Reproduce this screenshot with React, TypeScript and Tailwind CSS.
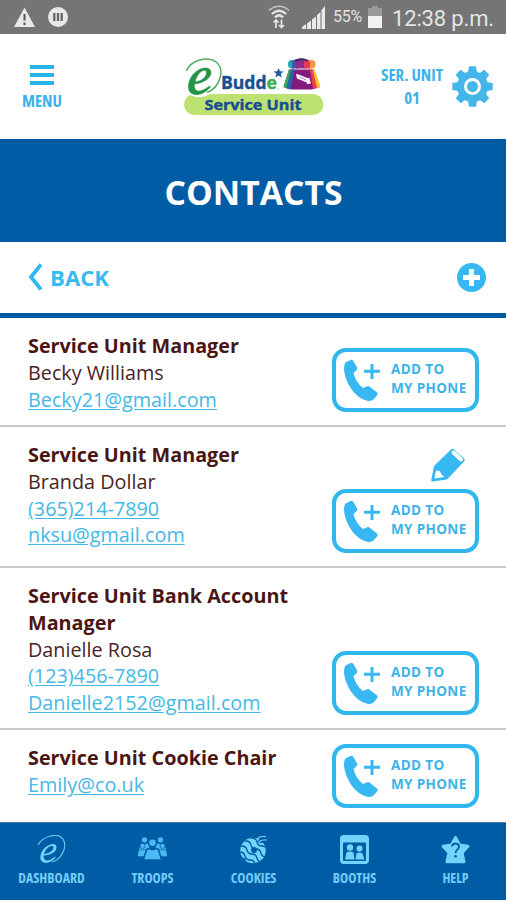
import type { ReactNode } from "react";

type Contact = {
  id: number;
  role: string;
  name?: string;
  phone?: string;
  email: string;
  height: string;
  editable?: boolean;
};

const contacts: Contact[] = [
  {
    id: 1,
    role: "Service Unit Manager",
    name: "Becky Williams",
    email: "Becky21@gmail.com",
    height: "h-[109px]",
  },
  {
    id: 2,
    role: "Service Unit Manager",
    name: "Branda Dollar",
    phone: "(365)214-7890",
    email: "nksu@gmail.com",
    height: "h-[141px]",
    editable: true,
  },
  {
    id: 3,
    role: "Service Unit Bank Account Manager",
    name: "Danielle Rosa",
    phone: "(123)456-7890",
    email: "Danielle2152@gmail.com",
    height: "h-[162px]",
  },
  {
    id: 4,
    role: "Service Unit Cookie Chair",
    email: "Emily@co.uk",
    height: "h-[92px]",
  },
];

const teeth = [0, 45, 90, 135, 180, 225, 270, 315];

function StatusBar() {
  return (
    <div className="flex h-[34px] items-center bg-[#757575] pl-[14px] pr-3 font-['Roboto',sans-serif] text-[#e4e4e4]">
      <svg className="h-5 w-[21px]" viewBox="0 0 21 20">
        <path d="M10.5 0.5 21 20H0Z" fill="#e8e8e8" />
        <path d="M10.5 7v6.5M10.5 15.5v2.5" stroke="#555" strokeWidth="2" />
      </svg>
      <svg className="ml-[13px] h-5 w-5" viewBox="0 0 20 20">
        <circle cx="10" cy="10" r="10" fill="#e8e8e8" />
        <path d="M6.3 6v8M10 6v8M13.7 6v8" stroke="#666" strokeWidth="2.3" />
      </svg>
      <svg className="ml-auto h-6 w-[22px]" viewBox="0 0 22 24" fill="none" stroke="#e4e4e4">
        <path d="M0.8 5.5Q11 -3 21.2 5.5" strokeWidth="1.6" opacity=".7" />
        <path d="M3.8 9Q11 2.5 18.2 9" strokeWidth="2.2" />
        <path d="M7 12.3Q11 8.5 15 12.3" strokeWidth="2.5" />
        <path d="M8 23v-8M5.5 17.5 8 15l2.5 2.5M13.5 14.5v8M11 20l2.5 2.5L16 20" strokeWidth="1.7" />
      </svg>
      <svg className="ml-[12px] h-[23px] w-[23px]" viewBox="0 0 23 23" fill="#e8e8e8">
        <path d="M0 23v-2l4-3v5zM5 23v-5.5l4-3V23zM10 23v-9.5l4-3V23zM15 23V9l3.5-3v17zM19.5 23V4L23 0v23z" />
      </svg>
      <span className="ml-[8px] w-[31px] whitespace-nowrap text-[16px] tracking-[-0.3px]">55%</span>
      <svg className="ml-[4px] h-[22px] w-[14px]" viewBox="0 0 14 22">
        <path d="M4 0h6v2h4v20H0V2h4z" fill="#999" />
        <path d="M0 10h14v12H0z" fill="#f2f2f2" />
      </svg>
      <span className="ml-[10px] w-[102px] whitespace-nowrap pt-[3px] text-[22px] leading-none tracking-[-0.15px]">
        12:38 p.m.
      </span>
    </div>
  );
}

function Logo() {
  return (
    <svg className="h-[60px] w-[142px]" viewBox="0 0 142 60">
      <rect x="2" y="37" width="139.5" height="21" rx="10.5" fill="#bde271" />
      <path d="M4 30 6 35.5Q10 41 19 40q8-1 14-7Z" fill="#fff" />
      <path
        d="M4.500 14C9 3 25-1 33.500 4.500c10 7 5 26-8.500 31"
        fill="none"
        stroke="#52ad62"
        strokeWidth="1.5"
      />
      <path
        fillRule="evenodd"
        d="M29 15.5C29 21 22 26 12.500 27c-1 8 5 10 15 2l1 1C18 42 5 39 6.500 28 8 17 17 11 23.500 11c3.500 0 5.500 2 5.500 4.500ZM13 25c7-1 11.500-5 11.500-9.500C24.500 11 16 13 13 25Z"
        fill="#259447"
        stroke="#259447"
        strokeWidth=".6"
      />
      <text
        x="39"
        y="32"
        className="font-['Open_Sans',sans-serif] text-[17.5px] font-bold"
        fill="#194f94"
        stroke="#194f94"
        strokeWidth=".4"
        textLength="56"
        lengthAdjust="spacingAndGlyphs"
      >
        Budd<tspan fill="#42ac55" stroke="#42ac55">e</tspan>
      </text>
      <path d="m96.500 11 1.500 3.300 3.700.2-2.900 2.300 1 3.700-3.300-2-3.100 2 1-3.700-2.900-2.300 3.700-.2z" fill="#225aa5" />
      <circle cx="96.5" cy="32" r=".6" fill="#6ab771" />
      <rect x="106" y="3" width="9" height="8.5" rx="4" fill="#27a5b8" />
      <rect x="124" y="3" width="9.5" height="8.5" rx="4" fill="#f59a3c" />
      <path d="M110 4q4-2 6-2v9.500h-6z" fill="#3f57a8" />
      <path d="M114 2.500q5-2 10 0v9h-10z" fill="#8c2b8c" />
      <path d="M122 2q5 .5 6 3v6.500h-6z" fill="#e23c5c" />
      <path d="M113 4q7-3.500 13 0" fill="none" stroke="#4b2670" strokeWidth="2" />
      <path d="M107 12.500h25l6 17.500-8 2.500h-20l-8.500-2.500z" fill="#84197f" />
      <path d="m107 12.500-5.500 17.500 3 1.500 5-19z" fill="#37a854" />
      <path d="m109 12.500-4.500 19 4 1 4-20z" fill="#2865ad" />
      <path d="m128 12.500 3 19.500 4-1-4.500-18.500z" fill="#ee3f48" />
      <path d="m130.500 12.500 4.500 18.500 3.500-1.500-6-17z" fill="#ffc42f" />
      <path d="m114 17 2.500.5 10 4 .5-1.500 2 6.500-4.500.5.500-1.500-10-4z" fill="#fff" />
      <path d="m117.500 20 7 3.200" stroke="#b476b5" strokeWidth="1" />
      <text
        x="22.5"
        y="52.5"
        className="font-['Open_Sans',sans-serif] text-[14.5px] font-bold"
        fill="#174c91"
        stroke="#174c91"
        strokeWidth=".4"
        textLength="97"
        lengthAdjust="spacingAndGlyphs"
      >
        Service Unit
      </text>
    </svg>
  );
}

function Header() {
  return (
    <header className="flex h-[105px] items-start justify-between bg-white font-['Open_Sans',sans-serif] font-bold text-[#3bb3e8]">
      <div className="flex w-[84px] flex-col items-center pt-[31px]">
        <div className="flex w-6 flex-col gap-1">
          <div className="h-1 bg-[#29b4e8]" />
          <div className="h-1 bg-[#29b4e8]" />
          <div className="h-1 bg-[#29b4e8]" />
        </div>
        <div className="mt-[6px] text-[16.8px] leading-5 [font-stretch:75%]">MENU</div>
      </div>
      <div className="ml-[98px] mt-[23px]">
        <Logo />
      </div>
      <div className="ml-auto mt-[29px] w-[66px] text-center text-[16.8px] leading-[23px] [font-stretch:75%]">
        <div className="whitespace-nowrap">SER. UNIT</div>
        <div>01</div>
      </div>
      <svg className="ml-[7px] mr-[13px] mt-[32px] size-[41px]" viewBox="-20.5 -20.5 41 41">
        {teeth.map((angle) => (
          <path key={angle} transform={`rotate(${angle})`} d="M-4.500-14-3.500-20.200h7L4.500-14z" fill="#44b6e9" />
        ))}
        <circle r="12" fill="none" stroke="#44b6e9" strokeWidth="7" />
        <circle r="5.5" fill="#44b6e9" />
      </svg>
    </header>
  );
}

function AddButton() {
  return (
    <button className="flex h-16 w-[147px] items-center rounded-[14px] border-4 border-[#2fb7ee] bg-white pl-[7px] text-left">
      <svg className="h-[43px] w-[38px] shrink-0" viewBox="0 0 38 43" fill="#38b8f3">
        <path d="M2.500 3.500 7 1.200q2-1 3.500 1l3.500 6q1 2-1 3.500L10.500 14q2 9 9.500 15l3.500-1.500q2-1 3.500.5l6.500 5q2 1.500.5 3.500l-3 3.500q-3 3-7.500 1.500C11 38 2 23 1 10q-.3-4 1.500-6.500Z" />
        <path d="M27.500 5h3v5.800H37v3h-6.500V20h-3v-6.200H21v-3h6.500z" />
      </svg>
      <span className="-mt-[3px] ml-[10px] whitespace-nowrap text-[13.5px] font-bold leading-[19px] tracking-[0.35px] text-[#3bb3e8]">
        ADD TO
        <br />
        MY PHONE
      </span>
    </button>
  );
}

function ContactRow({ contact }: { contact: Contact }) {
  return (
    <li
      className={`flex justify-between border-b-2 border-[#c9c9c9] pl-7 pr-[27px] last:border-b-0 last:pb-px ${contact.height}`}
    >
      <div className="w-[290px] pt-[15.4px] text-[19.8px] leading-[26.6px] text-[#4a2421]">
        <h2 className="font-bold text-[#4a1512]">{contact.role}</h2>
        {contact.name && <p>{contact.name}</p>}
        {contact.phone && (
          <p>
            <a className="text-[#45b8e6] underline underline-offset-2">{contact.phone}</a>
          </p>
        )}
        <p>
          <a className="text-[#45b8e6] underline underline-offset-2">{contact.email}</a>
        </p>
      </div>
      <div className="flex flex-col items-end justify-end pb-[13px]">
        {contact.editable && (
          <svg className="mb-[7px] mr-[14px] h-[34px] w-[34px]" viewBox="0 0 34 34">
            <path
              d="M20 1.500Q21.500 0 23 1.500L33 10.500Q34.500 12 33 13.500L17.500 30Q16 31.500 14 31.800L1.500 33.500Q0 33.500.3 32L2.500 20Q3 18 4 17Z"
              fill="#38b8f3"
            />
            <path d="M5 22.500 9 23l1.500 3.500 3 2.500L3.500 30.500Z" fill="#fff" />
            <path d="m22.500 4.500 7.500 7" stroke="#fff" strokeWidth="3.8" strokeLinecap="round" />
          </svg>
        )}
        <AddButton />
      </div>
    </li>
  );
}

function NavItem({ label, children }: { label: string; children: ReactNode }) {
  return (
    <div className="flex flex-1 flex-col items-center pt-3">
      <svg className="size-[29px]" viewBox="0 0 29 29" fill="#72d3fb">
        {children}
      </svg>
      <span className="mt-[5px] text-[13.8px] font-bold leading-[18px] text-[#72cdf8] [font-stretch:75%]">{label}</span>
    </div>
  );
}

function Person({ x, y, scale }: { x: number; y: number; scale: number }) {
  return (
    <g transform={`translate(${x} ${y}) scale(${scale})`}>
      <circle cy="-5" r="3.5" />
      <path d="M-3 0q3 2 6 0 2 0 2.500 2L8 10H-8l2.500-8q.5-2 2.500-2Z" />
    </g>
  );
}

function BottomNav() {
  return (
    <nav className="flex h-[78px] border-t border-[#4b7dad] bg-[#005da5] pl-px">
      <NavItem label="DASHBOARD">
        <path d="M1 10C6 1 21-3 26 4c5 8-2 21-11 23" fill="none" stroke="#62c9ef" strokeWidth="1.2" />
        <path
          fillRule="evenodd"
          d="M19.500 12.500C19.500 17 14 20 6.500 20.500c0 6 5 7 11.500 1l.8.8C12 31 2 29 3.500 21 4.500 14 11 9 16 9c2.500 0 3.500 1.500 3.500 3.500ZM7 19c5-.5 9.500-3.500 9.500-6.500S9.500 11 7 19Z"
        />
      </NavItem>
      <NavItem label="TROOPS">
        <g fill="#4bb9f4">
          <Person x={6.5} y={8.5} scale={0.75} />
          <Person x={22.5} y={8.5} scale={0.75} />
          <g stroke="#005da5" strokeWidth="1">
            <Person x={4.5} y={14.5} scale={0.72} />
            <Person x={24.5} y={14.5} scale={0.72} />
          </g>
          <g stroke="#005da5" strokeWidth="1.3">
            <Person x={14.5} y={13.5} scale={1.15} />
          </g>
        </g>
      </NavItem>
      <NavItem label="COOKIES">
        <clipPath id="cookie">
          <circle cx="14" cy="15.5" r="12.7" />
        </clipPath>
        <circle cx="14" cy="15.5" r="12.7" />
        <g clipPath="url(#cookie)" fill="none" stroke="#005da5" strokeWidth="1.3">
          <path d="M8-1q1 4 5 4t5 4 5 4 5 4 5 4" />
          <path d="M2 2q1 4 5 4t5 4 5 4 5 4 5 4" />
          <path d="M-2 7q1 4 5 4t5 4 5 4 5 4 5 4" />
          <path d="M-4 13q1 4 5 4t5 4 5 4 5 4" />
          <path d="M-3 19q1 4 5 4t5 4 5 4" />
        </g>
        <circle cx="15" cy="15" r="3" fill="#005da5" />
        <path d="m18 6.500 3-2.500 3-3h5v7h-7z" fill="#005da5" />
        <path d="M18 4.500q2-3 5-3h4M20 7q2-2 4-2h4" fill="none" stroke="#72d3fb" strokeWidth="1.2" />
      </NavItem>
      <NavItem label="BOOTHS">
        <rect width="29" height="29" rx="4" />
        <rect x="3" y="7.5" width="23" height="18.5" rx="1" fill="#005da5" />
        <circle cx="10" cy="12.5" r="3.2" />
        <circle cx="19.5" cy="13.5" r="3" />
        <path d="M5 24.500 6.500 17.500q3.500-2 7 0l1 7zM15.500 24.500l1-6q3-2 6 0l2 6z" />
      </NavItem>
      <NavItem label="HELP">
        <path
          d="m14.500 2.500 4 7.500 8.500 1.300-6 6.400 2 9h-17l2-9-6-6.400 8.500-1.300z"
          stroke="#72d3fb"
          strokeWidth="3"
          strokeLinejoin="round"
        />
        <path d="M11 11.500c.5-4 7-4 7 .2 0 3-3.500 3-3.500 6.300" fill="none" stroke="#005da5" strokeWidth="1.8" />
        <circle cx="14.5" cy="21.2" r="1.3" fill="#005da5" />
      </NavItem>
    </nav>
  );
}

function App() {
  return (
    <div className="h-[900px] w-[506px] overflow-hidden bg-white font-['Open_Sans',sans-serif]">
      <StatusBar />
      <Header />
      <h1 className="flex h-[103px] items-center justify-center bg-[#005da5] pl-px pt-[3px] text-[33.7px] font-bold text-white">
        CONTACTS
      </h1>
      <div className="flex h-[76px] items-center justify-between border-b-[5px] border-[#005da5] pl-7 pr-5">
        <div className="flex items-center gap-[7px] text-[22.2px] font-bold text-[#37baf0]">
          <svg className="h-7 w-[15px]" viewBox="0 0 15 28" fill="none" stroke="#30b8f2" strokeWidth="3.8">
            <path d="M13 1.500 3 14l10 12.500" />
          </svg>
          <span className="pt-px">BACK</span>
        </div>
        <svg className="size-[29px]" viewBox="0 0 29 29">
          <circle cx="14.5" cy="14.5" r="14.5" fill="#38b8f3" />
          <path d="M14.500 6v17M6 14.500h17" stroke="#fff" strokeWidth="5" />
        </svg>
      </div>
      <ul>
        {contacts.map((contact) => (
          <ContactRow key={contact.id} contact={contact} />
        ))}
      </ul>
      <BottomNav />
    </div>
  );
}

export default App;
